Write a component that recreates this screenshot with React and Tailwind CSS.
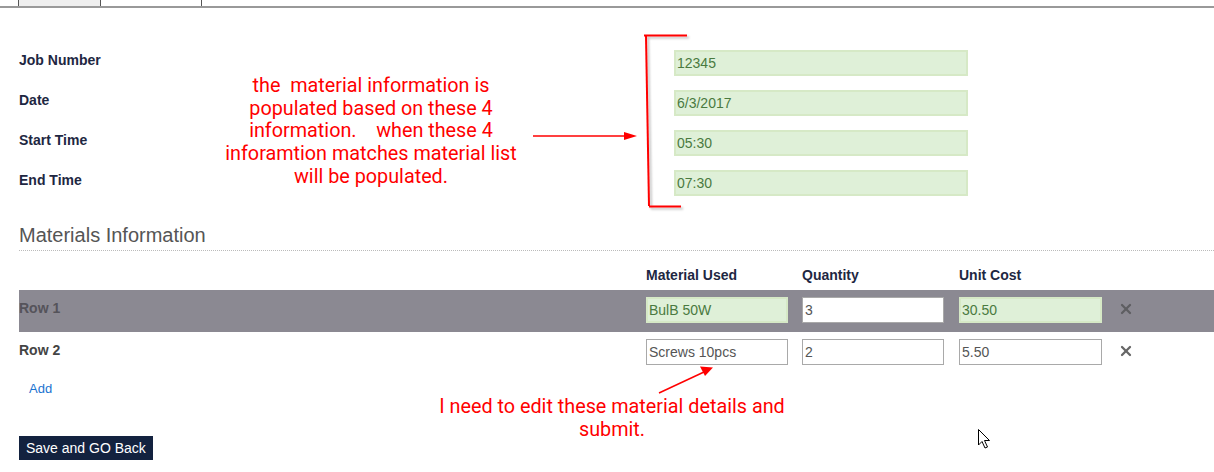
import { X } from "lucide-react";

const jobFields = [
  { label: "Job Number", value: "12345" },
  { label: "Date", value: "6/3/2017" },
  { label: "Start Time", value: "05:30" },
  { label: "End Time", value: "07:30" },
];

const greenInput =
  "h-[26px] border-2 border-[#d6e9c6] bg-[#dff0d8] px-[1px] text-[14px] leading-[22px] text-[#4a7a40]";
const plainInput =
  "h-[26px] border border-[#a9a9a9] bg-white px-[2px] text-[14px] leading-[24px] text-[#555]";

function Annotations() {
  return (
    <svg className="pointer-events-none absolute inset-0" width="1214" height="472">
      <defs>
        <filter id="sh" x="-20%" y="-20%" width="140%" height="140%">
          <feDropShadow dx="2" dy="2" stdDeviation="1" floodColor="#000" floodOpacity="0.25" />
        </filter>
      </defs>
      {/* arrow to bracket */}
      <line x1="533" y1="136" x2="626" y2="136" stroke="#ff0000" strokeWidth="1.5" />
      <polygon points="624,132 637,136 624,140" fill="#ff0000" />
      {/* bracket */}
      <g filter="url(#sh)" stroke="#ff0000" strokeWidth="2" fill="none">
        <line x1="644" y1="35.5" x2="687" y2="35.5" />
        <line x1="646" y1="36" x2="649" y2="206" />
        <line x1="649" y1="206.5" x2="681" y2="206.5" />
      </g>
      {/* arrow to row 2 */}
      <line x1="659" y1="393" x2="704" y2="372" stroke="#ff0000" strokeWidth="1.5" />
      <polygon points="700,366.5 713,367.5 705,376" fill="#ff0000" />
      {/* cursor */}
      <path
        d="M978.5 429.5 L978.5 445 L982 441.5 L985 448 L987.5 447 L984.5 440.5 L989.5 440.5 Z"
        fill="#fff"
        stroke="#000"
        strokeWidth="1"
      />
    </svg>
  );
}

function MaterialRow({ label, shaded, material, qty, cost }) {
  return (
    <div className={`flex h-[42px] items-start pt-[7px] ${shaded ? "bg-[#8b8992]" : ""}`}>
      <div className={`w-[627px] pt-[1px] text-[14px] font-bold leading-[20px] ${shaded ? "text-[#55535a]" : "text-[#444]"}`}>
        {label}
      </div>
      <div className={`w-[142px] ${shaded ? greenInput : plainInput}`}>{material}</div>
      <div className={`ml-[14px] w-[142px] ${plainInput}`}>{qty}</div>
      <div className={`ml-[15px] w-[143px] ${shaded ? greenInput : plainInput}`}>{cost}</div>
      <X size={16} strokeWidth={3.4} className={`ml-[16px] mt-[4px] ${shaded ? "text-[#5e5e62]" : "text-[#666]"}`} />
    </div>
  );
}

export default function App() {
  return (
    <div className="relative h-[472px] w-[1214px] overflow-hidden bg-white font-['Liberation_Sans',Arial,sans-serif]">
      <div className="flex h-[8px] border-b-2 border-[#999] pl-[18px]">
        <div className="w-[83px] border-x border-[#555] bg-[#eee]" />
        <div className="w-[101px] border-r border-[#555]" />
      </div>

      <div className="pl-[19px]">
        <div className="flex flex-col gap-[14px] pt-[42px]">
          {jobFields.map((f) => (
            <div key={f.label} className="flex items-start">
              <div className="w-[655px] text-[14px] font-bold leading-[20px] text-[#1e2742]">{f.label}</div>
              <div className={`w-[294px] ${greenInput}`}>{f.value}</div>
            </div>
          ))}
        </div>

        <h2 className="mt-[25px] border-b border-dotted border-[#bbb] pb-[1px] text-[20px] font-normal leading-[28px] text-[#555]">
          Materials Information
        </h2>

        <div className="mt-[14px] flex text-[14px] font-bold leading-[20px] text-[#1e2742]">
          <div className="w-[627px]" />
          <div className="w-[156px]">Material Used</div>
          <div className="w-[157px]">Quantity</div>
          <div>Unit Cost</div>
        </div>

        <div className="mt-[5px]">
          <MaterialRow label="Row 1" shaded material="BulB 50W" qty="3" cost="30.50" />
          <MaterialRow label="Row 2" material="Screws 10pcs" qty="2" cost="5.50" />
        </div>

        <a className="ml-[10px] mt-[6px] block w-fit text-[13px] leading-[18px] text-[#1a73d0]">Add</a>

        <button className="mt-[38px] block h-[24px] bg-[#13223f] px-[7px] text-[14px] leading-[24px] text-white">
          Save and GO Back
        </button>
      </div>

      <div className="absolute left-[196px] top-[75px] w-[350px] text-center font-['Roboto',Arial,sans-serif] text-[19.8px] leading-[22.7px] whitespace-pre text-[#ff0000]">
        {"the  material information is\npopulated based on these 4\ninformation.    when these 4\ninforamtion matches material list\nwill be populated."}
      </div>

      <div className="absolute left-[402px] top-[395px] w-[420px] text-center font-['Roboto',Arial,sans-serif] text-[19.8px] leading-[23px] whitespace-pre text-[#ff0000]">
        {"I need to edit these material details and\nsubmit."}
      </div>

      <Annotations />
    </div>
  );
}
